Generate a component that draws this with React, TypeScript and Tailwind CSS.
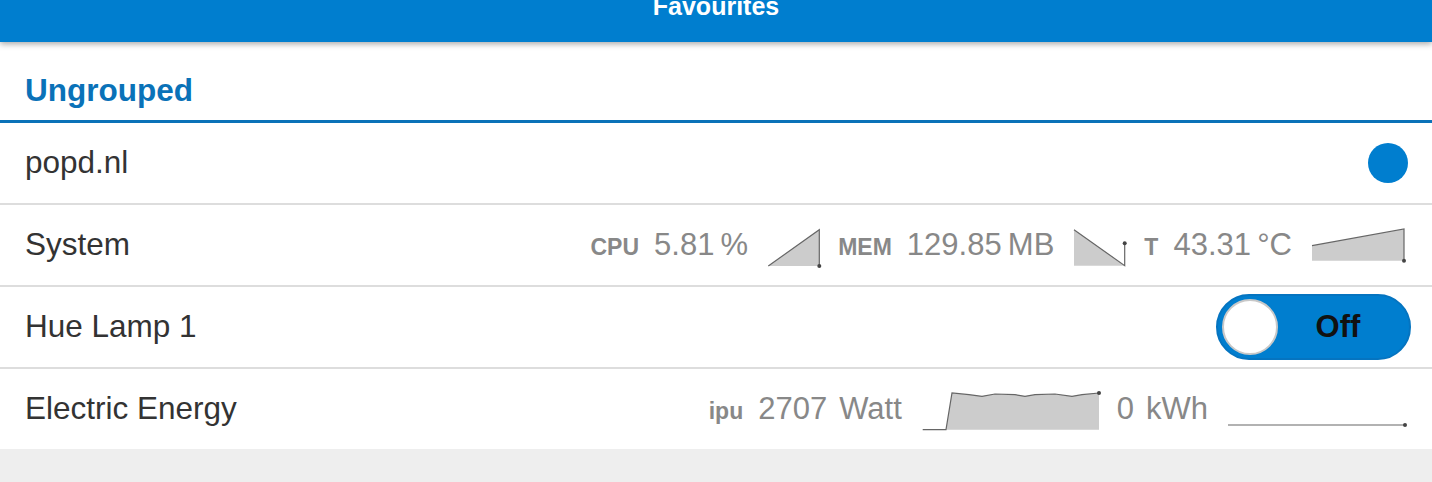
import React from 'react'

const BLUE = '#007ecf'

const Spark: React.FC<{ w: number; fill?: string; line: string; dot: [number, number] }> = ({ w, fill, line, dot }) => (
  <svg width={w} height={48} viewBox={`0 0 ${w} 48`} className="shrink-0">
    {fill && <polygon points={fill} fill="#cccccc" />}
    <polyline points={line} fill="none" stroke="#666" strokeWidth={1.2} />
    <circle cx={dot[0]} cy={dot[1]} r={2} fill="#444" />
  </svg>
)

// small bold label sitting on the same baseline as its value
const Stat: React.FC<{ label?: string; value: string; unit?: string }> = ({ label, value, unit }) => (
  <div className="mr-[19px] flex items-baseline">
    {label && <span className="mr-[15px] text-[23px] font-bold text-[#888]">{label}</span>}
    <span className="text-[31px] text-[#888]">{value}</span>
    {unit && <span className="ml-[12px] text-[31px] text-[#888]">{unit}</span>}
  </div>
)

const Row: React.FC<{ name: string; last?: boolean; children?: React.ReactNode }> = ({ name, last, children }) => (
  <div
    className={`flex h-[80px] items-center justify-between bg-white pl-[25px] pr-[24px] ${
      last ? '' : 'box-content border-b-2 border-[#dddddd]'
    }`}
  >
    <span className="text-[31.5px] text-[#333]">{name}</span>
    <div className="flex items-center">{children}</div>
  </div>
)

const wave =
  '31,8 48,9.7 61,11.3 74,9 94,9.7 104,11.3 114,9.7 134,9 151,11.3 161,9.7 178,8'

const App: React.FC = () => {
  return (
    <div className="h-[482px] overflow-hidden bg-[#eeeeee] font-['Liberation_Sans',Arial,sans-serif]">
      <div className="relative z-10 h-[42px] overflow-hidden bg-[#007ecf] text-center shadow-[0_2px_6px_rgba(0,0,0,0.35)]">
        <div className="mt-[-9px] text-[25px] font-bold leading-[30px] text-white">Favourites</div>
      </div>

      <div className="h-[81px] border-b-[3px] border-[#0a72b8] bg-white pl-[25px] pt-[30px]">
        <div className="text-[31.5px] font-bold leading-[36px] text-[#0a72b8]">Ungrouped</div>
      </div>

      <Row name="popd.nl">
        <div className="h-[40px] w-[40px] rounded-full" style={{ backgroundColor: BLUE }} />
      </Row>

      <Row name="System">
        <Stat label="CPU" value={'5.81\u2009%'} />
        <div className="mr-[16px]">
          <Spark w={55} fill="1.3,45 52.3,8.7 52.3,45" line="1.3,45 52.3,8.7 52.3,45" dot={[52.3, 45]} />
        </div>
        <Stat label="MEM" value={'129.85\u2009MB'} />
        <div className="mr-[16px]">
          <Spark w={55} fill="1,8.7 51.7,44.7 1,44.7" line="1,8.7 51.7,44.7 51.7,22.3" dot={[51.7, 22.3]} />
        </div>
        <Stat label="T" value={'43.31\u2009°C'} />
        <Spark w={97} fill="1,24.7 93,8 93,39.7 1,39.7" line="1,24.7 93,8 93,39.7" dot={[93, 39.7]} />
      </Row>

      <Row name="Hue Lamp 1">
        <div className="-mr-[3px] flex h-[66px] w-[195px] items-center rounded-full border-2 border-[#0574c0] bg-[#007ecf] pl-[4px]">
          <div className="h-[56px] w-[56px] rounded-full border-2 border-[#c8c8c8] bg-white" />
          <span className="flex-1 pr-[11px] text-center text-[31px] font-bold text-[#111]">Off</span>
        </div>
      </Row>

      <Row name="Electric Energy" last>
        <Stat label="ipu" value="2707" unit="Watt" />
        <div className="mr-[16px]">
          <Spark
            w={180}
            fill={`25,44.7 ${wave} 178,44.7`}
            line={`1.7,44.7 25,44.7 ${wave}`}
            dot={[178, 8]}
          />
        </div>
        <Stat value="0" unit="kWh" />
        <Spark w={181} line="1,40 178,40" dot={[178, 40]} />
      </Row>
    </div>
  )
}

export default App
